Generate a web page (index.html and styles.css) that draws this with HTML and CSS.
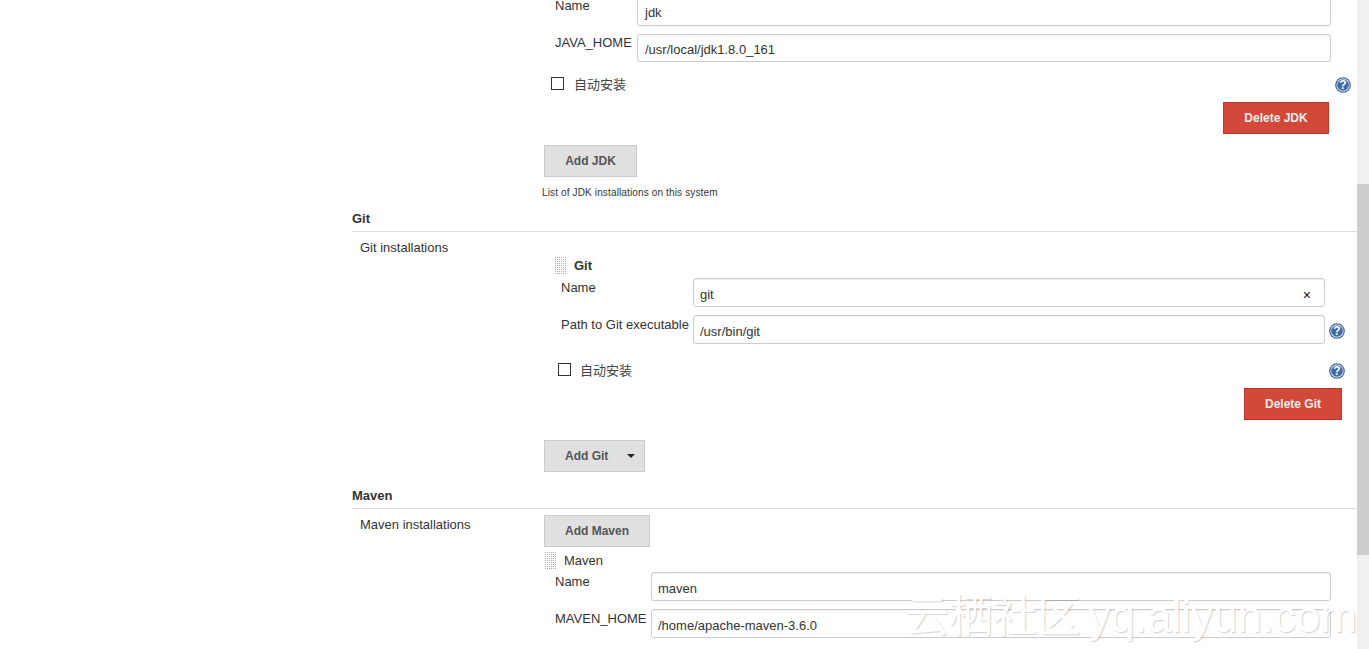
FILE: index.html
```html
<!DOCTYPE html>
<html lang="en">
<head>
<meta charset="utf-8">
<title>Global Tool Configuration</title>
<link rel="stylesheet" href="styles.css">
</head>
<body>
<svg class="defs" width="0" height="0" aria-hidden="true">
  <symbol id="help" viewBox="0 0 16 16">
    <circle cx="8" cy="8" r="7.8" fill="#2f5a96"/>
    <circle cx="8" cy="8" r="6.7" fill="#dfe7f2"/>
    <circle cx="8" cy="8" r="5.8" fill="#3d6aa6"/>
    <text x="8" y="12.4" text-anchor="middle" class="help-mark">?</text>
  </symbol>
</svg>
<div class="window">
  <main class="content">
    <div class="install install-first">
      <div class="install-label"></div>
      <div class="install-body">
        <div class="item item-jdk">
          <div class="row">
            <span class="row-label label-jdk">Name</span>
            <div class="field">jdk</div>
            <span class="help-slot"></span>
          </div>
          <div class="row">
            <span class="row-label label-jdk">JAVA_HOME</span>
            <div class="field field-short">/usr/local/jdk1.8.0_161</div>
            <span class="help-slot"></span>
          </div>
          <div class="check-row">
            <label class="check"><input type="checkbox" class="box"><span>自动安装</span></label>
            <svg class="help-icon"><use href="#help"/></svg>
          </div>
          <button class="btn btn-delete delete-jdk">Delete JDK</button>
        </div>
        <button class="btn btn-add add-jdk">Add JDK</button>
        <p class="caption">List of JDK installations on this system</p>
      </div>
    </div>

    <h2 class="section-title title-git">Git</h2>
    <div class="install">
      <div class="install-label">Git installations</div>
      <div class="install-body">
        <div class="item-head head-git"><span class="handle"></span><strong>Git</strong></div>
        <div class="item item-git item-low">
          <div class="row">
            <span class="row-label label-git">Name</span>
            <div class="field field-clear">git<span class="clear">×</span></div>
            <span class="help-slot"></span>
          </div>
          <div class="row">
            <span class="row-label label-git">Path to Git executable</span>
            <div class="field">/usr/bin/git</div>
            <svg class="help-icon help-path"><use href="#help"/></svg>
          </div>
          <div class="check-row check-row-git">
            <label class="check check-git"><input type="checkbox" class="box"><span>自动安装</span></label>
            <svg class="help-icon"><use href="#help"/></svg>
          </div>
          <button class="btn btn-delete delete-git">Delete Git</button>
        </div>
        <button class="btn btn-add add-git">Add Git<span class="caret"></span></button>
      </div>
    </div>

    <h2 class="section-title title-maven">Maven</h2>
    <div class="install">
      <div class="install-label">Maven installations</div>
      <div class="install-body">
        <button class="btn btn-add add-maven">Add Maven</button>
        <div class="item-head head-maven"><span class="handle"></span><span>Maven</span></div>
        <div class="item item-jdk item-low">
          <div class="row">
            <span class="row-label label-maven">Name</span>
            <div class="field">maven</div>
            <span class="help-slot"></span>
          </div>
          <div class="row">
            <span class="row-label label-maven">MAVEN_HOME</span>
            <div class="field">/home/apache-maven-3.6.0</div>
            <span class="help-slot"></span>
          </div>
        </div>
      </div>
    </div>
  </main>
  <div class="scrollbar"><div class="thumb"></div></div>
  <div class="watermark">云栖社区 yq.aliyun.com</div>
</div>
</body>
</html>
```
FILE: styles.css
```css
* { box-sizing: border-box; }
html, body { margin: 0; height: 100%; overflow: hidden; background: #fff; }
body { font: 13px/18px "Liberation Sans", "Noto Sans CJK SC", sans-serif; color: #333; }
.defs { position: absolute; }
.help-mark { font: bold 12px "Liberation Sans", sans-serif; fill: #fff; }

.window { position: relative; display: flex; height: 649px; overflow: hidden; }
.content { flex: 1; min-width: 0; padding-left: 352px; }
.scrollbar { width: 12px; background: #f0f0f0; padding-top: 184px; }
.thumb { height: 371px; background: #cdcdcd; }

.install { display: grid; grid-template-columns: 184px 1fr; padding-left: 8px; }
.install-first { margin-top: -3px; }
.install-body { display: flex; flex-direction: column; align-items: flex-start; min-width: 0; }

.section-title { margin: 0; font-size: 13px; line-height: 18px; font-weight: bold; border-bottom: 1px solid #ddd; height: 22px; }
.title-git { margin-top: 9px; }
.title-maven { margin-top: 15px; }
.install-label { padding-top: 7px; }

.item { width: 100%; display: flex; flex-direction: column; }
.item-jdk { padding: 0 6px 0 11px; }
.item-git { padding: 0 12px 0 17px; }

.row { display: flex; gap: 4px; margin-bottom: 8px; }
.row-label { flex: none; }
.label-jdk { width: 78px; }
.label-git { width: 128px; }
.label-maven { width: 92px; }
.help-slot { flex: none; width: 16px; }

.field { flex: 1; min-width: 0; height: 29px; padding: 6px 7px 0; line-height: 18px; background: #fff; color: #333; border: 1px solid #ccc; border-radius: 3px; box-shadow: inset 0 1px 1px rgba(0,0,0,.06); display: flex; justify-content: space-between; }
.field-short { height: 28px; }
.item-low .row-label { padding-top: 1px; }
.item-low .field { padding: 7px 7px 0 6px; }
.clear { margin-right: 6px; color: #111; font-size: 14px; }

.check-row { display: flex; justify-content: space-between; align-items: flex-start; margin: 7px 0 9px -4px; height: 16px; }
.check-row-git { margin-top: 11px; margin-left: -3px; }
.check { display: flex; align-items: flex-start; gap: 10px; line-height: 18px; }
.check-git { gap: 9px; }
.box { appearance: none; width: 13px; height: 13px; margin: 0; border: 1px solid #333; background: #fff; border-radius: 0; }
.check span { margin-top: -1px; color: #444; }
.help-icon { width: 16px; height: 16px; flex: none; }
.help-path { margin-top: 8px; }

.btn { display: block; height: 32px; padding: 0; font: bold 12px/30px "Liberation Sans", sans-serif; border-radius: 0; }
.btn-add { background: #e0e0e0; border: 1px solid #ccc; color: #555; }
.btn-delete { background: #d24939; border: 1px solid #c0392b; color: #eee; align-self: flex-end; }
.delete-jdk { width: 106px; margin-right: 22px; }
.delete-git { width: 98px; margin-right: 3px; }
.add-jdk { width: 93px; margin-top: 11px; }
.add-git { width: 101px; margin-top: 20px; display: flex; align-items: center; justify-content: flex-start; padding-left: 20px; }
.add-maven { width: 106px; margin-top: 6px; }
.caret { width: 0; height: 0; margin-left: 19px; border: 4px solid transparent; border-top-color: #222; border-bottom: 0; }

.caption { margin: 8px 0 0 -2px; font-size: 10px; line-height: 16px; letter-spacing: .14px; }

.item-head { display: flex; align-items: center; height: 18px; }
.head-git { margin: 25px 0 3px 11px; gap: 7px; }
.head-maven { margin: 5px 0 2px 1px; gap: 7px; }
.handle { width: 12px; height: 18px; background: conic-gradient(#aaa 0 25%, transparent 0) -1px 0 / 2px 2px; }

.watermark { position: absolute; left: 905px; top: 592px; font-size: 44px; line-height: 50px; word-spacing: -5px; white-space: nowrap; color: #fff; font-family: "Liberation Sans", "Noto Sans CJK SC", sans-serif; font-weight: 400; text-shadow: 1px 1px 1px rgba(0,0,0,.18); }
```
